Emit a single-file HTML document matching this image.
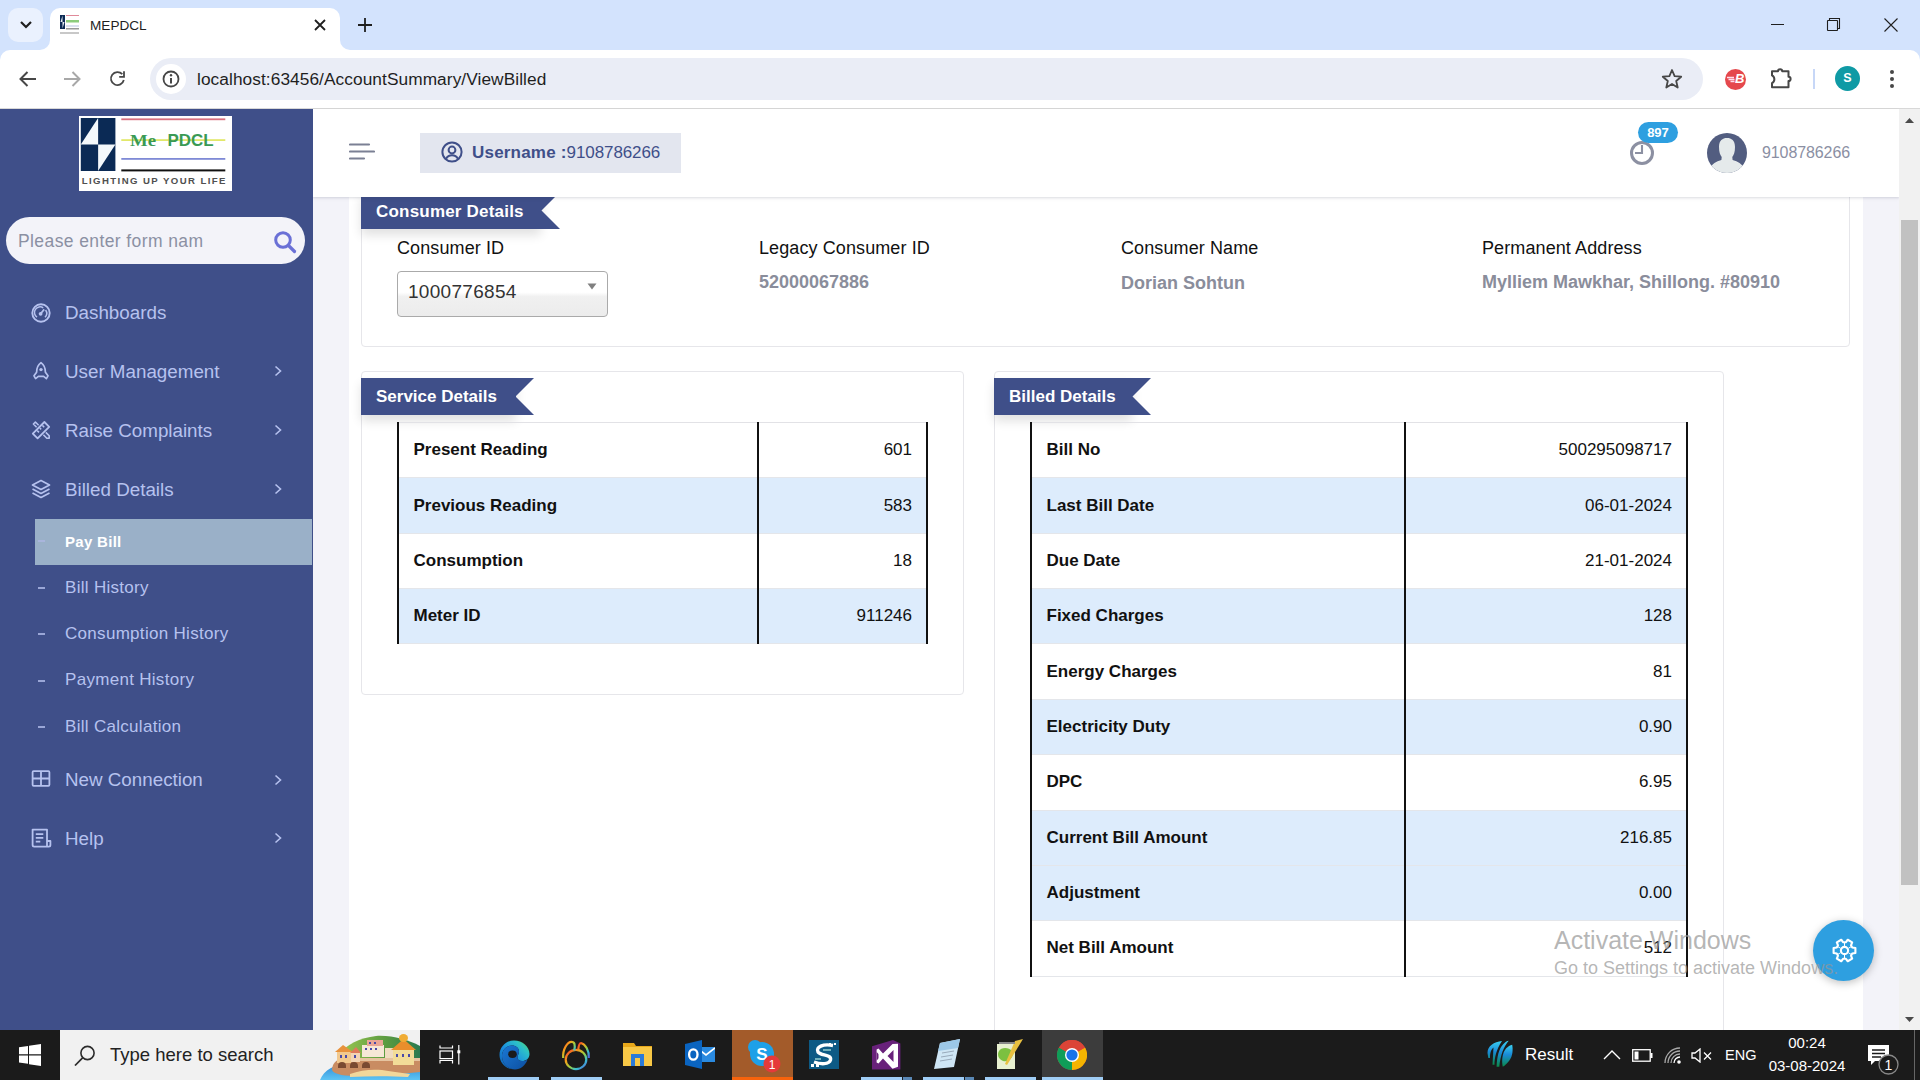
<!DOCTYPE html>
<html><head><meta charset="utf-8">
<style>
*{box-sizing:border-box;margin:0;padding:0}
html,body{width:1920px;height:1080px;overflow:hidden;background:#fff;font-family:"Liberation Sans",sans-serif}
.a{position:absolute}
svg{display:block}
/* chrome */
#tabs{left:0;top:0;width:1920px;height:62px;background:#d3e3fd}
#tb{left:0;top:50px;width:1920px;height:59px;background:#fff;border-bottom:1px solid #d8d8d8;border-radius:10px 10px 0 0}
/* sidebar */
#side{left:0;top:109px;width:313px;height:921px;background:#3f4f89}
.mi{position:absolute;left:65px;color:#b6c2ef;font-size:18.8px;line-height:20px;white-space:nowrap}
.mic{position:absolute;left:31px}
.chev{position:absolute;left:274px}
.si{position:absolute;left:65px;color:#b6c2ef;font-size:17px;letter-spacing:0.3px;line-height:20px;white-space:nowrap}
.dash{position:absolute;left:38px;width:7px;height:2px;background:#9aa6d6}
/* page */
#page{left:313px;top:109px;width:1586px;height:921px;background:#f3f3f9;overflow:hidden}
#hdr{left:313px;top:109px;width:1586px;height:88px;background:#fff;box-shadow:0 1px 2px rgba(40,50,80,.13),0 2px 4px rgba(40,50,80,.04)}
.card{position:absolute;background:#fff;border:1px solid #e6e6ea;border-radius:4px}
.rib{position:absolute;height:37px;background:#3f4f89;color:#fff;font-weight:bold;font-size:17px;line-height:37px;padding-left:15px;box-shadow:0 6px 10px rgba(0,0,0,.12)}
.lbl{position:absolute;font-size:18px;letter-spacing:0.1px;color:#111;white-space:nowrap;line-height:20px}
.val{position:absolute;font-size:18px;font-weight:bold;color:#8a8d9b;white-space:nowrap;line-height:20px}
table.t{position:absolute;border-collapse:collapse;border-top:1px solid #e2e2e6;border-bottom:1px solid #e2e2e6}
table.t td{height:55.36px;border-bottom:1px solid #e4e6ea;padding:0 14px 0 14.5px;font-size:17px;color:#111;white-space:nowrap}
table.t td:first-child{font-weight:bold;border-left:2px solid #111;border-right:2px solid #111}
table.t td:last-child{text-align:right;border-right:2px solid #111}
table.t tr.b td{background:#ddecfc}
/* taskbar */
#task{left:0;top:1030px;width:1920px;height:50px;background:#1b1b1b}
</style></head><body>

<!-- ============ BROWSER CHROME ============ -->
<div id="tabs" class="a"></div>
<!-- tab -->
<div class="a" style="left:50px;top:8px;width:290px;height:44px;background:#fff;border-radius:10px 10px 0 0"></div>
<div class="a" style="left:40px;top:40px;width:10px;height:10px;background:#fff"></div>
<div class="a" style="left:30px;top:30px;width:20px;height:20px;background:#d3e3fd;border-radius:0 0 10px 0"></div>
<div class="a" style="left:340px;top:40px;width:10px;height:10px;background:#fff"></div>
<div class="a" style="left:340px;top:30px;width:20px;height:20px;background:#d3e3fd;border-radius:0 0 0 10px"></div>
<div class="a" style="left:8px;top:8px;width:35px;height:34px;border-radius:10px;background:#eaf1fe"></div>
<svg class="a" style="left:18px;top:18px" width="16" height="14" viewBox="0 0 16 14"><path d="M3 4 L8 9 L13 4" fill="none" stroke="#1f1f1f" stroke-width="2.2"/></svg>
<!-- favicon -->
<svg class="a" style="left:60px;top:15px" width="20" height="20" viewBox="0 0 20 20">
  <rect x="0" y="0" width="20" height="20" fill="#fff"/>
  <rect x="0" y="0" width="5" height="14" fill="#0d2a55"/>
  <path d="M2.5 0.5V7H0.5Z M2.5 7H4.5L2.5 13.5Z" fill="#e8eef5"/>
  <rect x="6" y="0" width="13" height="1" fill="#e08a9a"/>
  <rect x="6" y="5" width="13" height="2.5" fill="#8ccc7c"/>
  <rect x="6" y="10.5" width="13" height="1" fill="#b8c4e4"/>
  <rect x="6" y="13" width="13" height="1.5" fill="#999"/>
  <rect x="0" y="17" width="19" height="2" fill="#c8c8c8"/>
</svg>
<div class="a" style="left:90px;top:17px;font-size:13.6px;line-height:18px;color:#1f1f1f">MEPDCL</div>
<svg class="a" style="left:314px;top:19px" width="12" height="12" viewBox="0 0 12 12"><path d="M1 1L11 11M11 1L1 11" stroke="#1f1f1f" stroke-width="1.8"/></svg>
<svg class="a" style="left:358px;top:18px" width="14" height="14" viewBox="0 0 14 14"><path d="M7 0V14M0 7H14" stroke="#1f1f1f" stroke-width="1.8"/></svg>
<!-- window controls -->
<div class="a" style="left:1771px;top:24px;width:13px;height:1px;background:#1f1f1f"></div>
<svg class="a" style="left:1826px;top:17px" width="15" height="15" viewBox="0 0 15 15"><rect x="1.5" y="3.5" width="10" height="10" rx="0.5" fill="none" stroke="#1f1f1f" stroke-width="1.1"/><path d="M3.5 3.5V1.5H13.5V11.5H11.5" fill="none" stroke="#1f1f1f" stroke-width="1.1"/></svg>
<svg class="a" style="left:1884px;top:18px" width="14" height="14" viewBox="0 0 14 14"><path d="M0.5 0.5L13.5 13.5M13.5 0.5L0.5 13.5" stroke="#1f1f1f" stroke-width="1.1"/></svg>

<!-- toolbar -->
<div id="tb" class="a"></div>
<svg class="a" style="left:18px;top:70px" width="20" height="18" viewBox="0 0 20 18"><path d="M18 9H3M9.5 2L2.5 9L9.5 16" fill="none" stroke="#474747" stroke-width="2"/></svg>
<svg class="a" style="left:62px;top:70px" width="20" height="18" viewBox="0 0 20 18"><path d="M2 9H17M10.5 2L17.5 9L10.5 16" fill="none" stroke="#a8a8a8" stroke-width="2"/></svg>
<svg class="a" style="left:107px;top:69px" width="20" height="20" viewBox="0 0 20 20"><path d="M15.3 5.2A6.5 6.5 0 1 0 16.8 11" fill="none" stroke="#474747" stroke-width="1.8"/><path d="M12.2 7.8H17V2.3" fill="none" stroke="#474747" stroke-width="1.8"/></svg>
<div class="a" style="left:150px;top:58px;width:1553px;height:42px;border-radius:21px;background:#eaedf6"></div>
<div class="a" style="left:156px;top:64px;width:30px;height:30px;border-radius:15px;background:#fff"></div>
<svg class="a" style="left:162px;top:70px" width="18" height="18" viewBox="0 0 18 18"><circle cx="9" cy="9" r="7.5" fill="none" stroke="#474747" stroke-width="1.8"/><path d="M9 8V13.5" stroke="#474747" stroke-width="2"/><circle cx="9" cy="5.3" r="1.2" fill="#474747"/></svg>
<div class="a" style="left:197px;top:69px;font-size:17.3px;letter-spacing:0.07px;line-height:20px;color:#1f1f1f">localhost:63456/AccountSummary/ViewBilled</div>
<svg class="a" style="left:1661px;top:68px" width="22" height="22" viewBox="0 0 22 22"><path d="M11 2L13.6 8.2L20.2 8.7L15.2 13L16.7 19.5L11 16L5.3 19.5L6.8 13L1.8 8.7L8.4 8.2Z" fill="none" stroke="#474747" stroke-width="1.8" stroke-linejoin="round"/></svg>
<div class="a" style="left:1725px;top:69px;width:21px;height:21px;border-radius:50%;background:#e5484d"></div>
<div class="a" style="left:1735px;top:71px;font-size:13px;font-weight:bold;font-style:italic;color:#fff;line-height:16px">B</div>
<svg class="a" style="left:1726px;top:74px" width="10" height="10" viewBox="0 0 10 10"><path d="M1 3.5H8M2.5 5.5H8.5M4.5 7.5H8.5" stroke="#fde" stroke-width="1.3"/></svg>
<svg class="a" style="left:1769px;top:67px" width="24" height="24" viewBox="0 0 24 24"><path d="M3 4.3H9A2.1 2.1 0 0 1 13.2 4.3H19.5V9.8A2.1 2.1 0 0 1 19.5 14V20.3H3V16.2A4.4 4.4 0 0 0 3 8.4Z" fill="none" stroke="#474747" stroke-width="2" stroke-linejoin="round"/></svg>
<div class="a" style="left:1813px;top:69px;width:2px;height:20px;background:#c7d7f7"></div>
<div class="a" style="left:1835px;top:66px;width:25px;height:25px;border-radius:50%;background:#0f9aa5"></div>
<div class="a" style="left:1835px;top:71px;width:25px;text-align:center;font-size:12.5px;font-weight:bold;color:#fff;line-height:15px">S</div>
<div class="a" style="left:1890px;top:70px;width:4px;height:4px;border-radius:50%;background:#474747"></div>
<div class="a" style="left:1890px;top:77px;width:4px;height:4px;border-radius:50%;background:#474747"></div>
<div class="a" style="left:1890px;top:84px;width:4px;height:4px;border-radius:50%;background:#474747"></div>

<!-- ============ PAGE ============ -->
<div id="page" class="a"></div>
<div class="a" style="left:349px;top:197px;width:1514px;height:833px;background:#fff"></div>

<!-- consumer card -->
<div class="card" style="left:361px;top:180px;width:1489px;height:167px"></div>
<div class="rib" style="left:361px;top:192px;width:180px;letter-spacing:0.2px;line-height:39px">Consumer Details</div>
<svg class="a" style="left:540px;top:192px" width="20" height="37" viewBox="0 0 20 37"><path d="M0 0H20L1.5 18.5L20 37H0Z" fill="#3f4f89"/></svg>
<div class="lbl" style="left:397px;top:238px">Consumer ID</div>
<div class="lbl" style="left:759px;top:238px">Legacy Consumer ID</div>
<div class="lbl" style="left:1121px;top:238px">Consumer Name</div>
<div class="lbl" style="left:1482px;top:238px">Permanent Address</div>
<div class="val" style="left:759px;top:272px">52000067886</div>
<div class="val" style="left:1121px;top:273px">Dorian Sohtun</div>
<div class="val" style="left:1482px;top:272px">Mylliem Mawkhar, Shillong. #80910</div>
<div class="a" style="left:397px;top:271px;width:211px;height:46px;border:1px solid #aaa;border-radius:4px;background:linear-gradient(#fff 46%,#f0f0f0 56%,#ececec 100%)"></div>
<div class="a" style="left:408px;top:282px;font-size:19px;letter-spacing:0.3px;line-height:20px;color:#333">1000776854</div>
<svg class="a" style="left:587px;top:283px" width="10" height="7" viewBox="0 0 10 7"><path d="M0.5 0.5H9.5L5 6.5Z" fill="#808080"/></svg>

<!-- service card -->
<div class="card" style="left:361px;top:371px;width:603px;height:324px"></div>
<div class="rib" style="left:361px;top:378px;width:155px">Service Details</div>
<svg class="a" style="left:515px;top:378px" width="19" height="37" viewBox="0 0 19 37"><path d="M0 0H19L0.5 18.5L19 37H0Z" fill="#3f4f89"/></svg>
<table class="t" style="left:397px;top:422px;width:531px">
<col style="width:361px"><col style="width:170px">
<tr><td>Present Reading</td><td>601</td></tr>
<tr class="b"><td>Previous Reading</td><td>583</td></tr>
<tr><td>Consumption</td><td>18</td></tr>
<tr class="b"><td>Meter ID</td><td>911246</td></tr>
</table>

<!-- billed card -->
<div class="card" style="left:994px;top:371px;width:730px;height:700px"></div>
<div class="rib" style="left:994px;top:378px;width:138px">Billed Details</div>
<svg class="a" style="left:1131px;top:378px" width="20" height="37" viewBox="0 0 20 37"><path d="M0 0H20L1.5 18.5L20 37H0Z" fill="#3f4f89"/></svg>
<table class="t" style="left:1030px;top:422px;width:658px">
<col style="width:375px"><col style="width:283px">
<tr><td>Bill No</td><td>500295098717</td></tr>
<tr class="b"><td>Last Bill Date</td><td>06-01-2024</td></tr>
<tr><td>Due Date</td><td>21-01-2024</td></tr>
<tr class="b"><td>Fixed Charges</td><td>128</td></tr>
<tr><td>Energy Charges</td><td>81</td></tr>
<tr class="b"><td>Electricity Duty</td><td>0.90</td></tr>
<tr><td>DPC</td><td>6.95</td></tr>
<tr class="b"><td>Current Bill Amount</td><td>216.85</td></tr>
<tr class="b"><td>Adjustment</td><td>0.00</td></tr>
<tr><td>Net Bill Amount</td><td>512</td></tr>
</table>

<!-- fab -->
<div class="a" style="left:1813px;top:920px;width:61px;height:61px;border-radius:50%;background:#2e9fe0;box-shadow:0 2px 8px rgba(0,0,0,.25)"></div>
<svg class="a" style="left:1831px;top:937px" width="27" height="27" viewBox="0 0 27 27"><path d="M21.22 10.44 L24.40 10.94 L24.40 16.06 L21.22 16.56 L20.00 18.66 L21.17 21.66 L16.74 24.22 L14.71 21.71 L12.29 21.71 L10.26 24.22 L5.83 21.66 L7.00 18.66 L5.78 16.56 L2.60 16.06 L2.60 10.94 L5.78 10.44 L7.00 8.34 L5.83 5.34 L10.26 2.78 L12.29 5.29 L14.71 5.29 L16.74 2.78 L21.17 5.34 L20.00 8.34Z" fill="none" stroke="#fff" stroke-width="2.1" stroke-linejoin="round"/><path d="M17.40 15.75L20.43 17.50M13.50 18.00L13.50 21.50M9.60 15.75L6.57 17.50M9.60 11.25L6.57 9.50M13.50 9.00L13.50 5.50M17.40 11.25L20.43 9.50" stroke="#fff" stroke-width="1"/><circle cx="13.5" cy="13.5" r="3.6" fill="none" stroke="#fff" stroke-width="2.1"/></svg>
<!-- activate windows -->
<div class="a" style="left:1554px;top:925px;font-size:25px;line-height:30px;color:rgba(150,150,150,.7);white-space:nowrap">Activate Windows</div>
<div class="a" style="left:1554px;top:958px;font-size:18px;line-height:20px;color:rgba(150,150,150,.7);white-space:nowrap">Go to Settings to activate Windows.</div>



<!-- header -->
<div id="hdr" class="a"></div>

<svg class="a" style="left:349px;top:143px" width="26" height="18" viewBox="0 0 26 18"><path d="M1 1.5H20M1 8.5H25M1 15.5H15" stroke="#7b8094" stroke-width="2.2" stroke-linecap="round"/></svg>
<div class="a" style="left:420px;top:133px;width:261px;height:40px;background:#e3e6ef"></div>
<svg class="a" style="left:441px;top:141px" width="22" height="22" viewBox="0 0 22 22"><circle cx="11" cy="11" r="9.6" fill="none" stroke="#3f4f89" stroke-width="2"/><circle cx="11" cy="9" r="3.4" fill="none" stroke="#3f4f89" stroke-width="2"/><path d="M5 17.8C6.5 15 9 14.2 11 14.2S15.5 15 17 17.8" fill="none" stroke="#3f4f89" stroke-width="2"/></svg>
<div class="a" style="left:472px;top:143px;font-size:17px;line-height:20px;color:#3f4f89;white-space:nowrap"><b style="letter-spacing:0.2px">Username :</b><span style="letter-spacing:-0.1px">9108786266</span></div>
<svg class="a" style="left:1629px;top:140px" width="26" height="26" viewBox="0 0 26 26"><circle cx="13" cy="13" r="10.5" fill="none" stroke="#8c90a2" stroke-width="3"/><path d="M13 5V13H6" fill="none" stroke="#8c90a2" stroke-width="2.1"/></svg>
<div class="a" style="left:1638px;top:122px;width:40px;height:21px;border-radius:10.5px;background:#2e9fe0;color:#fff;font-weight:bold;font-size:13px;line-height:21px;text-align:center">897</div>
<svg class="a" style="left:1707px;top:133px" width="40" height="40" viewBox="0 0 40 40"><defs><clipPath id="avc"><circle cx="20" cy="20" r="20"/></clipPath></defs><circle cx="20" cy="20" r="20" fill="#525d80"/><path clip-path="url(#avc)" d="M12 14C12 7.5 15.5 5 20 5C24.5 5 28 7.5 28 14C28 19 26.8 22 25.3 24L25.6 27C31 28.5 35 31 37 35L37 41H3V35C5 31 9 28.5 14.4 27L14.7 24C13.2 22 12 19 12 14Z" fill="#e5eaeb"/></svg>
<div class="a" style="left:1762px;top:143px;font-size:16px;letter-spacing:-0.1px;line-height:20px;color:#8b8fa3">9108786266</div>


<!-- sidebar -->
<div id="side" class="a"></div>

<div class="a" style="left:79px;top:116px;width:153px;height:75px;background:#fff">
  <svg class="a" style="left:0;top:0" width="153" height="75" viewBox="0 0 153 75">
    <rect x="1.8" y="2" width="34.6" height="53" fill="#0b2a55"/>
    <path d="M19.1 2V28.4H1.8Z" fill="#f4f8fb"/>
    <path d="M19.1 28.4H36.4L19.1 55Z" fill="#f4f8fb"/>
    <rect x="42.3" y="2.4" width="104" height="1.8" fill="#d9707e"/>
    <rect x="42.3" y="23.2" width="104" height="1.8" fill="#e2e86a"/>
    <rect x="42.3" y="42" width="104" height="1.8" fill="#7f8ad6"/>
    <rect x="42.3" y="53.4" width="104" height="2" fill="#111"/>
    <text x="51" y="30.2" font-family="Liberation Serif" font-weight="bold" font-size="17.5" fill="#3a9a55" textLength="26" lengthAdjust="spacingAndGlyphs">Me</text><text x="88.5" y="30.2" font-family="Liberation Sans" font-weight="bold" font-size="16.5" fill="#3a9a55" textLength="46" lengthAdjust="spacingAndGlyphs">PDCL</text>
    <text x="2.7" y="68.4" font-family="Liberation Sans" font-weight="bold" font-size="9.6" fill="#505050" textLength="143.8" lengthAdjust="spacing">LIGHTING UP YOUR LIFE</text>
  </svg>
</div>
<div class="a" style="left:6px;top:217px;width:299px;height:47px;border-radius:24px;background:#f3f3f9"></div>
<div class="a" style="left:18px;top:231px;font-size:17.5px;letter-spacing:0.4px;line-height:20px;color:#8b90a3;white-space:nowrap">Please enter form nam</div>
<svg class="a" style="left:273px;top:230px" width="24" height="24" viewBox="0 0 24 24"><circle cx="10" cy="10" r="7.3" fill="none" stroke="#6a70d6" stroke-width="3"/><path d="M15.5 15.5L21.5 21.5" stroke="#6a70d6" stroke-width="3.2" stroke-linecap="round"/></svg>

<!-- menu -->
<svg class="mic" style="top:303px" width="20" height="20" viewBox="0 0 20 20"><circle cx="10" cy="10" r="8.7" fill="none" stroke="#b6c2ef" stroke-width="1.9"/><path d="M6 14.2A5.6 5.6 0 0 1 12.2 4.8M14.6 7A5.6 5.6 0 0 1 14 14.2" fill="none" stroke="#b6c2ef" stroke-width="1.5"/><circle cx="9.6" cy="10.8" r="1.9" fill="#b6c2ef"/><path d="M9.6 10.8L13.2 6.4" stroke="#b6c2ef" stroke-width="1.7"/></svg>
<div class="mi" style="top:303px">Dashboards</div>
<svg class="mic" style="top:361px" width="20" height="20" viewBox="0 0 20 20"><path d="M10 1.6C6.6 4 5.6 7.5 5.6 11.2L3 14.8L4.6 17.6L7.4 15.4H12.6L15.4 17.6L17 14.8L14.4 11.2C14.4 7.5 13.4 4 10 1.6Z" fill="none" stroke="#b6c2ef" stroke-width="1.7" stroke-linejoin="round"/><circle cx="10" cy="8.6" r="1.7" fill="#b6c2ef"/></svg>
<div class="mi" style="top:362px">User Management</div>
<svg class="chev" style="top:365px" width="9" height="12" viewBox="0 0 9 12"><path d="M1.5 1.5L6.5 6L1.5 10.5" fill="none" stroke="#b6c2ef" stroke-width="1.6"/></svg>
<svg class="mic" style="top:420px" width="20" height="20" viewBox="0 0 20 20"><path d="M1.8 13.6L13.4 2L18.2 6.8L6.6 18.4Z" fill="none" stroke="#b6c2ef" stroke-width="1.8" stroke-linejoin="round"/><path d="M6.2 10.6L8 12.4M8.8 8L10.2 9.4M11.4 5.4L13.2 7.2" stroke="#b6c2ef" stroke-width="1.5"/><path d="M5.6 7.2L2.4 4L4.4 2L7.6 5.2M12.4 14.8L15.8 18.2H18.2V15.8L14.8 12.4" fill="none" stroke="#b6c2ef" stroke-width="1.6" stroke-linejoin="round"/></svg>
<div class="mi" style="top:421px">Raise Complaints</div>
<svg class="chev" style="top:424px" width="9" height="12" viewBox="0 0 9 12"><path d="M1.5 1.5L6.5 6L1.5 10.5" fill="none" stroke="#b6c2ef" stroke-width="1.6"/></svg>
<svg class="mic" style="top:479px" width="20" height="20" viewBox="0 0 20 20"><path d="M10 1.5L18.5 6L10 10.5L1.5 6Z" fill="none" stroke="#b6c2ef" stroke-width="1.7" stroke-linejoin="round"/><path d="M1.5 10L10 14.5L18.5 10" fill="none" stroke="#b6c2ef" stroke-width="1.7" stroke-linejoin="round"/><path d="M1.5 14L10 18.5L18.5 14" fill="none" stroke="#b6c2ef" stroke-width="1.7" stroke-linejoin="round"/></svg>
<div class="mi" style="top:480px">Billed Details</div>
<svg class="chev" style="top:483px" width="9" height="12" viewBox="0 0 9 12"><path d="M1.5 1.5L6.5 6L1.5 10.5" fill="none" stroke="#b6c2ef" stroke-width="1.6"/></svg>

<div class="a" style="left:35px;top:519px;width:277px;height:46px;background:#9ab0c8"></div>
<div class="dash" style="top:540px;background:#a9b5dc"></div>
<div class="si" style="top:532px;color:#fff;font-weight:bold;font-size:15px;letter-spacing:0.3px">Pay Bill</div>
<div class="dash" style="top:587px"></div>
<div class="si" style="top:578px">Bill History</div>
<div class="dash" style="top:633px"></div>
<div class="si" style="top:624px">Consumption History</div>
<div class="dash" style="top:680px"></div>
<div class="si" style="top:670px">Payment History</div>
<div class="dash" style="top:726px"></div>
<div class="si" style="top:717px">Bill Calculation</div>

<svg class="mic" style="top:769px" width="20" height="20" viewBox="0 0 20 20"><rect x="1.6" y="2.2" width="16.8" height="14.6" rx="1" fill="none" stroke="#b6c2ef" stroke-width="1.8"/><path d="M10 2.2V16.8M1.6 9.5H18.4" stroke="#b6c2ef" stroke-width="1.8"/></svg>
<div class="mi" style="top:770px">New Connection</div>
<svg class="chev" style="top:774px" width="9" height="12" viewBox="0 0 9 12"><path d="M1.5 1.5L6.5 6L1.5 10.5" fill="none" stroke="#b6c2ef" stroke-width="1.6"/></svg>
<svg class="mic" style="top:828px" width="21" height="20" viewBox="0 0 21 20"><path d="M16 13V1.6H1.6V17A1.6 1.6 0 0 0 3.2 18.6H17.8A1.6 1.6 0 0 0 19.4 17V13H16V18.6" fill="none" stroke="#b6c2ef" stroke-width="1.8" stroke-linejoin="round"/><path d="M4.8 6.2H12.3M4.8 9.9H12.3M4.8 13.7H9.3" stroke="#b6c2ef" stroke-width="1.7"/></svg>
<div class="mi" style="top:829px">Help</div>
<svg class="chev" style="top:832px" width="9" height="12" viewBox="0 0 9 12"><path d="M1.5 1.5L6.5 6L1.5 10.5" fill="none" stroke="#b6c2ef" stroke-width="1.6"/></svg>


<!-- scrollbar -->
<div class="a" style="left:1899px;top:109px;width:21px;height:921px;background:#f1f1f1"></div>
<div class="a" style="left:1901px;top:220px;width:17px;height:665px;background:#c1c1c1"></div>
<svg class="a" style="left:1904px;top:117px" width="11" height="7" viewBox="0 0 11 7"><path d="M1 6H10L5.5 1Z" fill="#4a4a4a"/></svg>
<svg class="a" style="left:1904px;top:1016px" width="11" height="7" viewBox="0 0 11 7"><path d="M1 1H10L5.5 6Z" fill="#4a4a4a"/></svg>

<!-- taskbar -->
<div id="task" class="a"></div>

<!-- win logo -->
<svg class="a" style="left:19px;top:1044px" width="22" height="22" viewBox="0 0 22 22"><path d="M0 3.2L9 2V10.3H0Z M10 1.8L22 0V10.3H10Z M0 11.4H9V19.8L0 18.6Z M10 11.4H22V22L10 20.2Z" fill="#fff"/></svg>
<div class="a" style="left:60px;top:1030px;width:360px;height:50px;background:#f1f1f1"></div>
<svg class="a" style="left:74px;top:1045px" width="22" height="21" viewBox="0 0 22 21"><circle cx="13.5" cy="8" r="6.6" fill="none" stroke="#2b2b2b" stroke-width="1.6"/><path d="M8.8 12.7L1 20.5" stroke="#2b2b2b" stroke-width="1.7"/></svg>
<div class="a" style="left:110px;top:1044px;font-size:18.5px;line-height:22px;color:#222;white-space:nowrap">Type here to search</div>
<!-- town picture -->
<svg class="a" style="left:320px;top:1030px" width="100" height="50" viewBox="0 0 100 50">
  <defs>
    <linearGradient id="sea" x1="0" y1="0" x2="0" y2="1"><stop offset="0" stop-color="#2a86d6"/><stop offset="1" stop-color="#5ec4f4"/></linearGradient>
    <linearGradient id="hill" x1="0" y1="0" x2="1" y2="0"><stop offset="0" stop-color="#9cc850"/><stop offset=".6" stop-color="#5a9a40"/><stop offset="1" stop-color="#2a7a50"/></linearGradient>
  </defs>
  <path d="M0 50 C4 40 14 34 30 33 C50 32 70 36 100 38 V50Z" fill="url(#sea)"/>
  <path d="M18 26 C26 14 40 8 56 6 C72 5 88 10 100 16 V34 H18Z" fill="url(#hill)"/>
  <path d="M12 40 C12 34 16 30 22 28 H100 V42 C80 44 60 46 40 46 C26 46 14 45 12 40Z" fill="#c98c62"/>
  <path d="M22 28 H100 V31 H20Z" fill="#e6c4a0"/>
  <path d="M30 44 C40 40 52 39 62 40 C70 41 80 43 90 44 L88 47 C70 46 50 46 30 47Z" fill="#f2d79a"/>
  <rect x="17" y="21" width="14" height="12" fill="#f2c98e"/>
  <path d="M15 22 L23 15 L33 22Z" fill="#e8923c"/>
  <rect x="31" y="22" width="9" height="10" fill="#f4d4b4"/>
  <path d="M30 23 L36 17 L41 23Z" fill="#e07a5a"/>
  <rect x="42" y="15" width="22" height="12" fill="#f6e8d6"/>
  <rect x="47" y="10" width="16" height="6" fill="#eaa696"/>
  <rect x="65" y="18" width="8" height="10" fill="#f0dcc0"/>
  <rect x="73" y="18" width="21" height="17" fill="#f2dc98"/>
  <path d="M71 20 L83.5 9 L96 20Z" fill="#ea8e2c"/>
  <ellipse cx="83.5" cy="8" rx="4.5" ry="4" fill="#f0ac34"/>
  <path d="M18 36A4 4 0 0 1 26 36V38H18Z M30 36A4 4 0 0 1 38 36V38H30Z M42 36A4 4 0 0 1 50 36V38H42Z" fill="#7a4a32"/>
  <g fill="#4a4aa8"><rect x="20" y="25" width="2" height="3"/><rect x="25" y="25" width="2" height="3"/><rect x="34" y="25" width="2" height="3"/><rect x="45" y="18" width="2" height="2"/><rect x="50" y="18" width="2" height="2"/><rect x="55" y="18" width="2" height="2"/><rect x="49" y="12" width="2" height="2"/><rect x="54" y="12" width="2" height="2"/><rect x="76" y="24" width="2" height="3"/><rect x="82" y="24" width="2" height="3"/><rect x="88" y="24" width="2" height="3"/></g>
</svg>
<!-- task view -->
<svg class="a" style="left:438px;top:1044px" width="23" height="21" viewBox="0 0 23 21"><path d="M2 1.5V4H14.5V1.5M2 19.6V16.5H14.5V19.6M20.8 1V20.5" fill="none" stroke="#fff" stroke-width="1.2"/><rect x="2" y="7" width="12.5" height="7.6" fill="none" stroke="#fff" stroke-width="1.2"/><rect x="19.3" y="6.3" width="3" height="3" fill="#fff"/></svg>
<!-- edge -->
<svg class="a" style="left:499px;top:1040px" width="31" height="30" viewBox="0 0 31 30">
  <defs>
    <linearGradient id="eg1" x1="0" y1="1" x2="1" y2="0"><stop offset="0" stop-color="#0c59a8"/><stop offset=".45" stop-color="#1b8fe0"/><stop offset=".75" stop-color="#2cc0c8"/><stop offset="1" stop-color="#58d860"/></linearGradient>
    <linearGradient id="eg2" x1="0" y1="0" x2="1" y2="1"><stop offset="0" stop-color="#1a78d4"/><stop offset="1" stop-color="#0d4fa0"/></linearGradient>
  </defs>
  <path d="M15 0.5C23.5 0.5 30.5 6.5 30.5 14C30.5 18.5 27 21 23 21C20 21 18.5 19.5 18.5 17.5C18.5 15 20 14 20 11.5C20 8 17 5.5 13 5.5C7.5 5.5 3 10 3 16C3 23 8.5 29.5 16 29.5C7 29.5 0.5 23 0.5 15C0.5 7 7 0.5 15 0.5Z" fill="url(#eg1)"/>
  <path d="M3 16C3 10 7.5 5.5 13 5.5C17 5.5 20 8 20 11.5C20 14 18.5 15 18.5 17.5C18.5 19.5 20 21 23 21C25 21 27 20.5 28.5 19.5C26.5 25.5 21.5 29.5 16 29.5C8.5 29.5 3 23 3 16Z" fill="url(#eg2)"/>
  <ellipse cx="13.5" cy="14.2" rx="4.3" ry="3.8" fill="#1b1b1b"/>
</svg>
<div class="a" style="left:488px;top:1077px;width:51px;height:3px;background:#9fcdf5"></div>
<!-- netbeans-like -->
<svg class="a" style="left:560px;top:1040px" width="32" height="31" viewBox="0 0 32 31">
  <defs><linearGradient id="nb" x1="0" y1="0" x2="1" y2="1"><stop offset="0" stop-color="#f0302a"/><stop offset=".3" stop-color="#f7a21a"/><stop offset=".55" stop-color="#9ad040"/><stop offset=".75" stop-color="#38c0d0"/><stop offset="1" stop-color="#5a5ae0"/></linearGradient></defs>
  <ellipse cx="16" cy="19.5" rx="10.3" ry="9.6" fill="none" stroke="url(#nb)" stroke-width="2.2"/>
  <path d="M3.2 18C2.5 9 7.5 1.8 11.5 1.8C14.5 1.8 15.5 4.5 14.2 10.5" fill="none" stroke="url(#nb)" stroke-width="2.2"/>
  <path d="M18.2 10.5C18.5 5.5 19.5 3 21 3C25 4 29.5 10.5 28.8 18" fill="none" stroke="url(#nb)" stroke-width="2.2"/>
</svg>
<div class="a" style="left:551px;top:1077px;width:51px;height:3px;background:#9fcdf5"></div>
<!-- explorer -->
<svg class="a" style="left:623px;top:1041px" width="29" height="25" viewBox="0 0 29 25"><path d="M0 2H11L13 5H29V25H0Z" fill="#e8a81a"/><rect x="0" y="6" width="29" height="19" fill="#f8c846"/><path d="M8 13H21V25H17V17H12V25H8Z" fill="#2a7ad8"/></svg>
<!-- outlook -->
<svg class="a" style="left:685px;top:1040px" width="30" height="29" viewBox="0 0 30 29"><rect x="12" y="7" width="18" height="15" fill="#2a8ae0"/><path d="M12 8L21 15L30 8" fill="none" stroke="#fff" stroke-width="1.6"/><path d="M0 4L17 0V29L0 25Z" fill="#0a64c0"/><ellipse cx="8.3" cy="14.5" rx="4.2" ry="5.2" fill="none" stroke="#fff" stroke-width="2.3"/></svg>
<!-- skype -->
<div class="a" style="left:732px;top:1030px;width:61px;height:50px;background:#a35b2a"></div>
<div class="a" style="left:732px;top:1077px;width:61px;height:3px;background:#f7630c"></div>
<svg class="a" style="left:747px;top:1039px" width="34" height="34" viewBox="0 0 34 34"><circle cx="8" cy="8" r="7" fill="#1ea0e8"/><circle cx="22" cy="22" r="7" fill="#1ea0e8"/><circle cx="15" cy="15" r="12" fill="#1ea0e8"/><text x="15" y="21" text-anchor="middle" font-family="Liberation Sans" font-weight="bold" font-size="17" fill="#fff">S</text><circle cx="25" cy="25" r="8.5" fill="#e53a3a"/><text x="25" y="30" text-anchor="middle" font-family="Liberation Sans" font-size="12" fill="#fff">1</text></svg>
<!-- sublime-ish -->
<svg class="a" style="left:809px;top:1040px" width="30" height="29" viewBox="0 0 30 29"><rect x="0" y="0" width="30" height="29" fill="#0d5a85"/><path d="M24 5.5C14 3.5 6.5 7 9 12C11.5 16 23 14 21.5 20C20 24.5 12 24.5 5 22" fill="none" stroke="#fff" stroke-width="3.4"/><path d="M14 10H22M6 19H12" stroke="#cfe" stroke-width="1.5" opacity=".7"/><rect x="2" y="24" width="3" height="3" fill="#fff"/><rect x="7" y="24" width="3" height="3" fill="#fff"/><rect x="20" y="3" width="2" height="2" fill="#fff"/><rect x="25" y="3" width="2" height="2" fill="#fff"/></svg>
<!-- visual studio -->
<svg class="a" style="left:872px;top:1040px" width="29" height="30" viewBox="0 0 29 30"><path d="M0 6.2L21 0L28.4 3.6V29.6H0Z" fill="#68217a"/><path d="M26 3.8V26.8L20.5 28.8L11 18.5L6.5 23.5L4.6 22.5V9.5L6.5 8.5L11 13.5L20.5 4Z" fill="#fff"/><path d="M21.5 10V22L15.5 16Z" fill="#68217a"/><path d="M4.6 12V20.5L8.8 16.2Z" fill="#68217a"/><path d="M6.5 12.6V19.8L9.8 16.2Z" fill="#fff"/></svg>
<div class="a" style="left:861px;top:1077px;width:41px;height:3px;background:#9fcdf5"></div>
<div class="a" style="left:903px;top:1077px;width:9px;height:3px;background:#5a88b5"></div>
<!-- notepad -->
<svg class="a" style="left:932px;top:1039px" width="30" height="30" viewBox="0 0 30 30"><path d="M8 4L28 0L22 28L2 30Z" fill="#cfe6f5"/><path d="M8 4L28 0L26 9L6 12Z" fill="#9cc8e8"/><path d="M10 14L22 12M9 18L21 16M8 22L20 20" stroke="#9ab" stroke-width="1"/></svg>
<div class="a" style="left:923px;top:1077px;width:41px;height:3px;background:#9fcdf5"></div>
<div class="a" style="left:965px;top:1077px;width:9px;height:3px;background:#5a88b5"></div>
<!-- notepad++ -->
<svg class="a" style="left:995px;top:1039px" width="30" height="31" viewBox="0 0 30 31"><path d="M2 5H20V30H2Z" fill="#e8f0d0"/><path d="M4 12C6 8 14 8 17 12C20 17 14 24 8 22C3 20 2 15 4 12Z" fill="#7cc040"/><path d="M20 2L28 0L12 26L10 25Z" fill="#e8c040"/><path d="M4 4H20" stroke="#888" stroke-width="2"/></svg>
<div class="a" style="left:985px;top:1077px;width:51px;height:3px;background:#9fcdf5"></div>
<!-- chrome -->
<div class="a" style="left:1042px;top:1030px;width:61px;height:50px;background:#3c3c3c"></div>
<svg class="a" style="left:1057px;top:1040px" width="30" height="30" viewBox="0 0 30 30"><circle cx="15" cy="15" r="15" fill="#db4437"/><path d="M15 15L2 7.5A15 15 0 0 0 15 30Z" fill="#0f9d58"/><path d="M15 15L15 30A15 15 0 0 0 28 7.5Z" fill="#f4b400"/><path d="M15 15L2 7.5A15 15 0 0 1 28 7.5Z" fill="#db4437"/><circle cx="15" cy="15" r="7" fill="#fff"/><circle cx="15" cy="15" r="5.6" fill="#1a73e8"/></svg>
<div class="a" style="left:1042px;top:1077px;width:61px;height:3px;background:#9fcdf5"></div>

<!-- tray -->
<svg class="a" style="left:1487px;top:1040px" width="27" height="29" viewBox="0 0 27 29"><defs><linearGradient id="rg" x1="0" y1="0" x2="0" y2="1"><stop offset="0" stop-color="#3ad0f0"/><stop offset=".45" stop-color="#1a8ad8"/><stop offset="1" stop-color="#0a8a48"/></linearGradient></defs><g fill="url(#rg)"><path d="M15 0.9C7 1.5 0.5 6 0.5 13L1.3 18H3C3 12 4.5 9 6.5 7.5L5.5 24.7H7.5C7.5 18 9 10 15 0.9Z"/><path d="M16 4.5C18 2 20 1 21.7 0.7C17 6 13.5 15 12.3 26.8H9.6C10 16 12 9 16 4.5Z"/><path d="M25.2 4.7C26 9 26 16 22 21C20 23.5 18 25.5 15.8 26.8C14.5 22 15 13 19 8.5C21 6.5 23 5.2 25.2 4.7Z"/></g></svg>
<div class="a" style="left:1525px;top:1045px;font-size:17px;line-height:20px;color:#fff">Result</div>
<svg class="a" style="left:1603px;top:1049px" width="18" height="11" viewBox="0 0 18 11"><path d="M1 10L9 2L17 10" fill="none" stroke="#fff" stroke-width="1.4"/></svg>
<svg class="a" style="left:1632px;top:1049px" width="21" height="13" viewBox="0 0 21 13"><rect x="0.7" y="0.7" width="17.5" height="11.5" fill="none" stroke="#fff" stroke-width="1.3"/><rect x="2.5" y="2.5" width="4" height="8" fill="#fff"/><rect x="18.5" y="4" width="2" height="5" fill="#fff"/></svg>
<svg class="a" style="left:1664px;top:1047px" width="18" height="17" viewBox="0 0 18 17"><path d="M1 16A15 15 0 0 1 16 1M4 16A12 12 0 0 1 16 4M7 16A9 9 0 0 1 16 7" fill="none" stroke="#aaa" stroke-width="1.3"/><path d="M10 16A6 6 0 0 1 16 10" fill="none" stroke="#fff" stroke-width="1.3"/><circle cx="15" cy="15" r="1.8" fill="#fff"/></svg>
<svg class="a" style="left:1691px;top:1048px" width="21" height="15" viewBox="0 0 21 15"><path d="M1 5H4L9 1V14L4 10H1Z" fill="none" stroke="#fff" stroke-width="1.3"/><path d="M13 4.5L20 11.5M20 4.5L13 11.5" stroke="#fff" stroke-width="1.3"/></svg>
<div class="a" style="left:1725px;top:1046px;font-size:14.5px;line-height:18px;color:#fff">ENG</div>
<div class="a" style="left:1765px;top:1034px;width:84px;text-align:center;font-size:15px;line-height:18px;color:#fff">00:24</div>
<div class="a" style="left:1765px;top:1057px;width:84px;text-align:center;font-size:15px;line-height:18px;color:#fff">03-08-2024</div>
<svg class="a" style="left:1867px;top:1044px" width="34" height="32" viewBox="0 0 34 32"><path d="M1 1H22V17H8L4 21V17H1Z" fill="#fff"/><path d="M5 6H18M5 9.5H18M5 13H14" stroke="#1b1b1b" stroke-width="1.3"/><circle cx="21.5" cy="20.5" r="9.5" fill="#1b1b1b" stroke="#888" stroke-width="1.3"/><text x="21.5" y="26" text-anchor="middle" font-family="Liberation Sans" font-size="14" fill="#fff">1</text></svg>
<div class="a" style="left:1914px;top:1030px;width:1px;height:50px;background:#666"></div>


</body></html>
